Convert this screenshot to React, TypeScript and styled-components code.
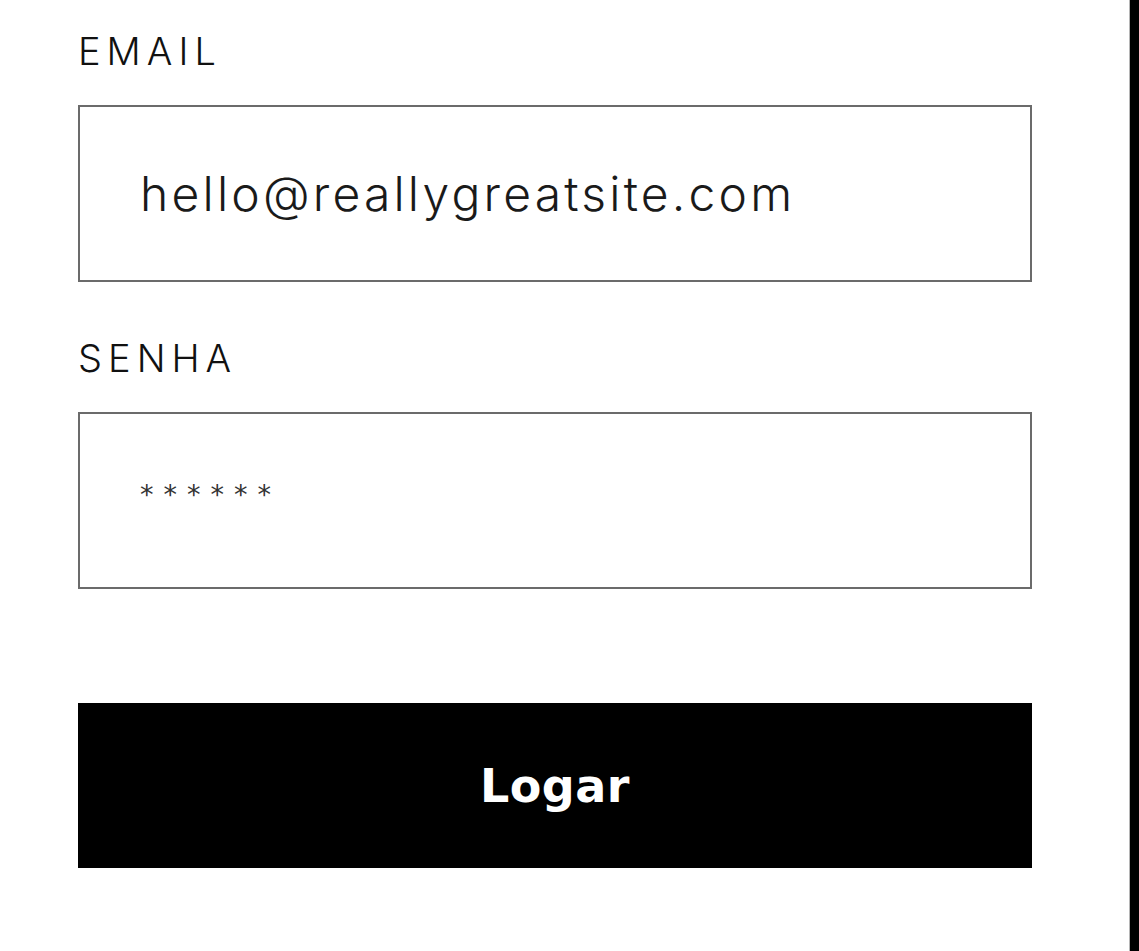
import React from "react";
import styled, { createGlobalStyle } from "styled-components";

const GlobalStyle = createGlobalStyle`
  html, body { margin: 0; padding: 0; background: #ffffff; }
  body { font-family: "Inter", "Liberation Sans", sans-serif; }
  * { box-sizing: border-box; }
`;

const Page = styled.div`
  display: flex;
  width: 100%;
  min-height: 100vh;
  background: #ffffff;
`;

const Main = styled.main`
  flex: 1;
  padding: 31px 97px 0 78px;
`;

const SideRule = styled.div`
  width: 10px;
  background: #000000;
  border-left: 1px solid #b5b5b5;
`;

const Form = styled.form`
  display: flex;
  flex-direction: column;
`;

const Label = styled.label`
  display: block;
  font-family: "Inter", "Liberation Sans", sans-serif;
  font-weight: 300;
  font-size: 38px;
  line-height: 40px;
  letter-spacing: 6px;
  color: #111111;
  margin-bottom: 34px;
`;

const Field = styled.div<{ $mb: number }>`
  display: flex;
  align-items: center;
  height: 177px;
  border: 2px solid #6b6b6b;
  padding-left: 60px;
  margin-bottom: ${(p) => p.$mb}px;
`;

const Value = styled.span`
  font-family: "Inter", "Liberation Sans", sans-serif;
  font-weight: 300;
  font-size: 48px;
  letter-spacing: 3.2px;
  color: #1a1a1a;
`;

const Mask = styled.span`
  font-family: "DejaVu Sans", "Liberation Sans", sans-serif;
  font-size: 27px;
  letter-spacing: 10px;
  color: #333333;
  margin-top: -12px;
`;

const Button = styled.button`
  display: flex;
  align-items: center;
  justify-content: center;
  height: 165px;
  width: 100%;
  border: none;
  background: #000000;
  color: #ffffff;
  font-family: "DejaVu Sans", "Liberation Sans", sans-serif;
  font-weight: 700;
  font-size: 46px;
  letter-spacing: 0.5px;
  padding: 0;
  cursor: pointer;
`;

export default function App() {
  return (
    <>
      <GlobalStyle />
      <Page>
        <Main>
          <Form onSubmit={(e) => e.preventDefault()}>
            <Label>EMAIL</Label>
            <Field $mb={56}>
              <Value>hello@reallygreatsite.com</Value>
            </Field>
            <Label>SENHA</Label>
            <Field $mb={114}>
              <Mask>******</Mask>
            </Field>
            <Button type="submit">Logar</Button>
          </Form>
        </Main>
        <SideRule />
      </Page>
    </>
  );
}
